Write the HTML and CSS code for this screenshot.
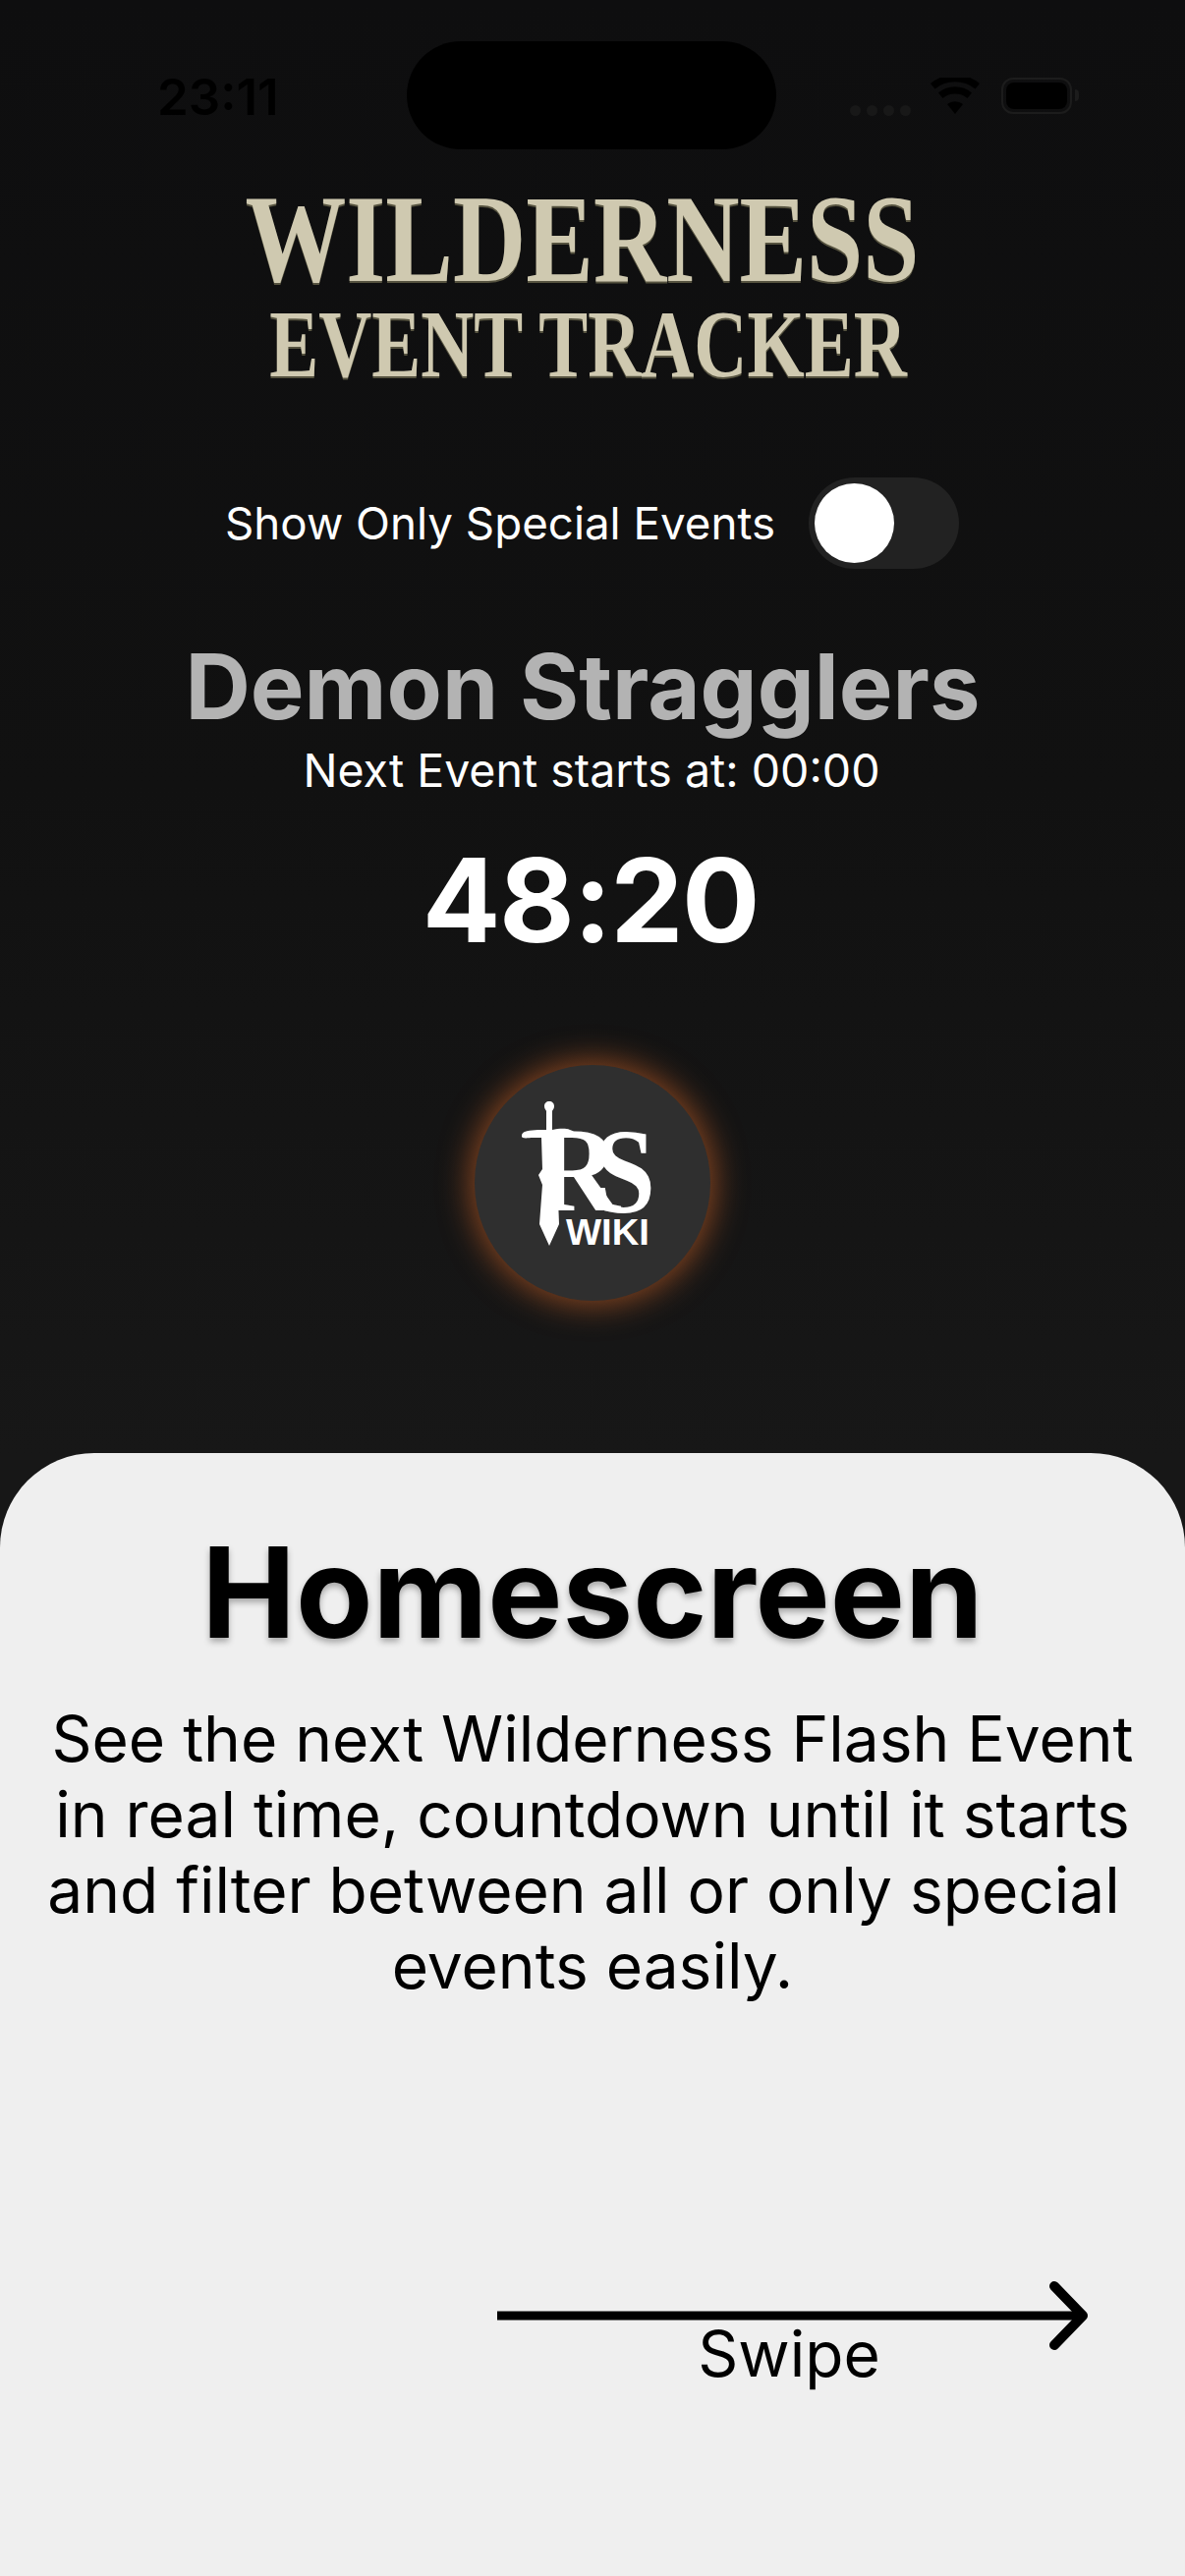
FILE: index.html
```html
<!DOCTYPE html>
<html lang="en">
<head>
    <meta charset="UTF-8">
    <title>Wilderness Event Tracker</title>
    <link rel="stylesheet" href="styles.css">
</head>
<body>

<div class="screen">
    <div class="status-bar">
        <span class="time">23:11</span>
        <div class="island"></div>
        <div class="status-icons">
            <div class="signal"><i></i><i></i><i></i><i></i></div>
            <svg class="wifi" width="50" height="37" viewBox="0 0 50 37">
                <path d="M25 37 L17 27 A13 13 0 0 1 33 27 Z" fill="#000"/>
                <path d="M12.500 21 L8 15.500 A26 26 0 0 1 42 15.500 L37.500 21 A20 20 0 0 0 12.500 21 Z" fill="#000"/>
                <path d="M4.500 11.500 L0 6 A39 39 0 0 1 50 6 L45.500 11.500 A33 33 0 0 0 4.500 11.500 Z" fill="#000"/>
            </svg>
            <div class="battery"><div class="battery-level"></div></div>
            <div class="battery-cap"></div>
        </div>
    </div>

    <div class="title">
        <div class="title-big">WILDERNESS</div>
        <div class="title-small">EVENT TRACKER</div>
    </div>

    <div class="filter">
        <span class="filter-label">Show Only Special Events</span>
        <div class="toggle"><div class="knob"></div></div>
    </div>

    <div class="event-name">Demon Stragglers</div>
    <div class="next-event">Next Event starts at: 00:00</div>
    <div class="countdown">48:20</div>

    <div class="logo">
        <svg width="240" height="240" viewBox="0 0 240 240">
            <defs>
                <clipPath id="r-clip"><rect x="76" y="60" width="80" height="100"/></clipPath>
            </defs>
            <text class="logo-letter" x="60" y="148" textLength="88" lengthAdjust="spacingAndGlyphs" clip-path="url(#r-clip)">R</text>
            <text class="logo-letter" x="122" y="150" textLength="62" lengthAdjust="spacingAndGlyphs">S</text>
            <path class="logo-mark" d="M76 37 C79 37 81 39 81 42 C81 45 79 46 79 47 L79 66 C85 65 92 64 97 66 C101 67 103 70 103 72 C100 71 97 74 92 74 L84 74 L84 110 L86 162 L76 184 L66 162 L69 122 L65 112 L69 106 L68 74 L60 74 C55 74 52 75 49 74 C47 73 48 69 51 68 C57 66 66 66 73 66 L73 47 C73 46 71 45 71 42 C71 39 73 37 76 37 Z"/>
            <text class="logo-wiki" x="93" y="183" textLength="85" lengthAdjust="spacingAndGlyphs">WIKI</text>
        </svg>
    </div>

    <div class="sheet">
        <h1 class="sheet-title">Homescreen</h1>
        <p class="sheet-text">
            See the next Wilderness Flash Event<br>
            in real time, countdown until it starts<br>
            and filter between all or only special&nbsp;<br>
            events easily.
        </p>
        <div class="swipe">
            <svg class="swipe-arrow" width="604" height="70" viewBox="0 0 604 70">
                <path d="M0 35 H596" stroke="#000" stroke-width="9" fill="none"/>
                <path d="M567 5 L596 35 L567 65" stroke="#000" stroke-width="10" stroke-linecap="round" stroke-linejoin="round" fill="none"/>
            </svg>
            <div class="swipe-label">Swipe</div>
        </div>
    </div>
</div>

</body>
</html>
```

FILE: styles.css
```css
body {
    margin: 0;
    font-family: Inter, "Liberation Sans", sans-serif;
}

.screen {
    width: 1206px;
    height: 2622px;
    display: flex;
    flex-direction: column;
    align-items: center;
    overflow: hidden;
    color: #fff;
    background: linear-gradient(#0e0e0f, #111 800px, #171717 1480px);
}

.status-bar {
    width: 100%;
    height: 152px;
    padding-top: 42px;
    box-sizing: border-box;
    display: grid;
    grid-template-columns: 414px 376px 1fr;
    flex-shrink: 0;
}

.time {
    margin-top: 30px;
    padding-left: 160px;
    font-size: 51px;
    line-height: 54px;
    font-weight: 600;
    color: #000;
}

.island {
    height: 110px;
    background: #000;
    border-radius: 55px;
}

.status-icons {
    display: flex;
    align-items: flex-start;
    padding: 37px 0 0 75px;
}

.signal {
    display: flex;
    gap: 6px;
    margin: 28px 20px 0 0;
}

.signal i {
    width: 11px;
    height: 11px;
    border-radius: 50%;
    background: #181818;
}

.wifi {
    flex-shrink: 0;
}

.battery {
    width: 72px;
    height: 37px;
    margin-left: 22px;
    box-sizing: border-box;
    border: 2px solid #1c1c1c;
    border-radius: 12px;
    padding: 3px;
}

.battery-level {
    height: 100%;
    background: #000;
    border-radius: 8px;
}

.battery-cap {
    width: 4px;
    height: 12px;
    margin: 12px 0 0 3px;
    background: #1c1c1c;
    border-radius: 0 4px 4px 0;
}

.title {
    margin-top: 31px;
    text-align: center;
    font-family: "Liberation Serif", serif;
    font-weight: 700;
    color: #cfc9b0;
    text-shadow: 0 2px 0 #55523f;
}

.title-big {
    font-size: 127px;
    line-height: 120px;
    transform: translateX(-11px) scaleX(0.81);
}

.title-small {
    margin-top: -2px;
    font-size: 97px;
    line-height: 100px;
    transform: translateX(-5px) scaleX(0.772);
}

.filter {
    display: flex;
    align-items: center;
    gap: 34px;
    margin-top: 85px;
    margin-left: -1px;
}

.filter-label {
    font-size: 45.700px;
}

.toggle {
    width: 153px;
    height: 93px;
    padding: 6px;
    box-sizing: border-box;
    background: #222;
    border-radius: 47px;
}

.knob {
    width: 81px;
    height: 81px;
    background: #fff;
    border-radius: 50%;
}

.event-name {
    margin-top: 65px;
    margin-left: -20px;
    font-size: 92px;
    line-height: 110px;
    font-weight: 700;
    color: #b3b3b3;
}

.next-event {
    margin-top: 3px;
    margin-left: -2px;
    font-size: 46.500px;
    line-height: 54px;
}

.countdown {
    margin-top: 36px;
    margin-left: -4px;
    font-size: 118px;
    line-height: 138px;
    font-weight: 700;
    letter-spacing: -1.500px;
}

.logo {
    width: 240px;
    height: 240px;
    margin-top: 99px;
    flex-shrink: 0;
    background: #2f2f2f;
    border-radius: 50%;
    box-shadow: 0 0 32px 4px rgba(160, 80, 35, 0.85);
}

.logo-mark {
    fill: #fff;
}

.logo-letter {
    font-family: "Liberation Serif", serif;
    font-size: 122px;
    font-weight: 700;
    fill: #fff;
}

.logo-wiki {
    font-family: "Liberation Sans", sans-serif;
    font-size: 36px;
    font-weight: 700;
    fill: #fff;
}

.sheet {
    width: 100%;
    flex: 1;
    margin-top: 155px;
    background: #efefef;
    border-radius: 96px 96px 0 0;
    color: #000;
    text-align: center;
}

.sheet-title {
    margin: 66px 0 0;
    font-size: 128px;
    line-height: 152px;
    font-weight: 700;
    text-shadow: 0 4px 6px rgba(0, 0, 0, 0.3);
}

.sheet-text {
    margin: 34px 0 0;
    font-size: 64px;
    line-height: 77px;
}

.swipe {
    width: 604px;
    margin: 283px 0 0 506px;
}

.swipe-arrow {
    display: block;
}

.swipe-label {
    margin-top: -32px;
    padding-right: 10px;
    font-size: 64px;
    line-height: 72px;
}
```
